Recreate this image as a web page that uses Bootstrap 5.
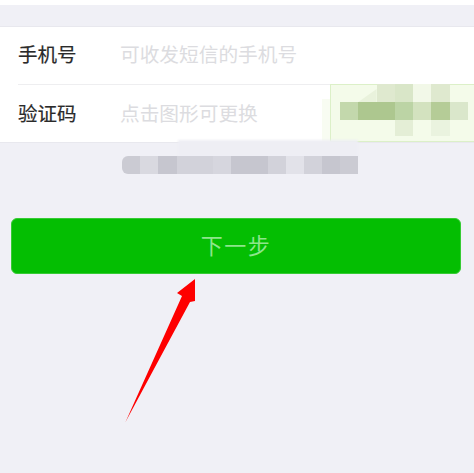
<!DOCTYPE html>
<html lang="zh">
<head>
<meta charset="utf-8">
<link href="https://cdn.jsdelivr.net/npm/bootstrap@5.3.0/dist/css/bootstrap.min.css" rel="stylesheet">
<style>
html,body{height:100%;}
body{background:#f0f0f6;font-family:"Noto Sans CJK SC","Liberation Sans",sans-serif;overflow:hidden;position:relative;}
.top-strip{height:5px;background:#fff;}
.grey-gap{height:22px;border-bottom:1px solid #e8e8ee;}
.form-block{background:#fff;border-bottom:1px solid #e8e8ee;position:relative;height:116px;}
.form-line{height:57px;padding-left:18px;padding-bottom:3px;}
.form-line+.form-line{margin-left:18px;padding-left:0;padding-bottom:2px;border-top:1px solid #eeeef0;height:58px;}
.line-label{width:102px;font-size:19.5px;color:#2a2a2a;-webkit-text-stroke:.2px #2a2a2a;}
.line-hint{font-size:19.7px;color:#dcdce0;}
.captcha-box{position:absolute;left:330px;top:57px;right:0;bottom:0;background:#f4fbea;border:1px solid #dcf0c8;border-right:0;filter:blur(.4px);}
.smear{position:absolute;left:322px;top:72px;width:10px;height:43px;background:#f8fcf2;}
.mosaic{position:absolute;display:grid;filter:blur(.5px);}
.cap-mosaic{left:340px;top:84px;grid-template-columns:repeat(7,18.3px);grid-template-rows:18px 18px 16px;}
.txt-band{position:absolute;left:178px;top:140px;width:180px;height:17px;background:#eeeef4;filter:blur(1px);}
.txt-mosaic{left:122px;top:156px;grid-template-columns:repeat(13,18.2px);grid-auto-rows:18px;}
.txt-mosaic>:first-child{border-radius:6px 0 0 6px;}
.c0{background:transparent;}
.diag{clip-path:polygon(0 100%,100% 28%,100% 100%);}
.g1{background:#e2e2e9;}.g2{background:#d9d9e0;}.g3{background:#d6d6de;}.g4{background:#d2d2da;}.g5{background:#cbcbd3;}.g6{background:#c6c6cf;}
.v1{background:#e9f2dc;}.v2{background:#dfe9cf;}.v3{background:#d9e6c8;}.v4{background:#bcd4a5;}.v5{background:#adc78f;}.v6{background:#f2f8e8;}.v7{background:#c3d8ac;}.v8{background:#d3e2bf;}.v9{background:#e4eed6;}.v10{background:#eaf3df;}.v11{background:#b5cc97;}.v12{background:#dae7cb;}
.next-wrap{padding:75px 13px 0 11px;}
.next-btn{height:56px;padding-bottom:10px;background:#04be02;border:1px solid #36cb34;border-radius:6px;color:#8de58c;font-size:22px;letter-spacing:1.5px;}
.next-btn:disabled{background:#04be02;border-color:#36cb34;color:#8de58c;opacity:1;}
.arrow-mark{position:absolute;left:120px;top:275px;}
</style>
</head>
<body>
<div class="top-strip"></div>
<div class="grey-gap"></div>
<div class="form-block">
  <div class="form-line d-flex align-items-center"><span class="line-label">手机号</span><span class="line-hint">可收发短信的手机号</span></div>
  <div class="form-line d-flex align-items-center"><span class="line-label">验证码</span><span class="line-hint">点击图形可更换</span></div>
  <div class="smear"></div>
  <div class="captcha-box"></div>
</div>
<div class="mosaic cap-mosaic">
  <div class="c0"></div><div class="v1 diag"></div><div class="v2"></div><div class="v3"></div><div class="v6"></div><div class="v2"></div><div class="c0"></div>
  <div class="v7"></div><div class="v5"></div><div class="v5"></div><div class="v4"></div><div class="v8"></div><div class="v11"></div><div class="v12"></div>
  <div class="c0"></div><div class="c0"></div><div class="c0"></div><div class="v9"></div><div class="c0"></div><div class="v10"></div><div class="c0"></div>
</div>
<div class="txt-band"></div>
<div class="mosaic txt-mosaic">
  <div class="g5"></div><div class="g2"></div><div class="g6"></div><div class="g4"></div><div class="g4"></div><div class="g3"></div><div class="g6"></div><div class="g6"></div><div class="g4"></div><div class="g1"></div><div class="g4"></div><div class="g6"></div><div class="g5"></div>
</div>
<div class="next-wrap"><button class="btn next-btn w-100 d-flex align-items-center justify-content-center" disabled>下一步</button></div>
<svg class="arrow-mark" width="80" height="150" viewBox="120 275 80 150"><polygon fill="#fe0000" points="195,279 177,293 182,296 125.5,422 190,302 195,301"/></svg>
<script src="https://cdn.jsdelivr.net/npm/bootstrap@5.3.0/dist/js/bootstrap.bundle.min.js"></script>
</body>
</html>
